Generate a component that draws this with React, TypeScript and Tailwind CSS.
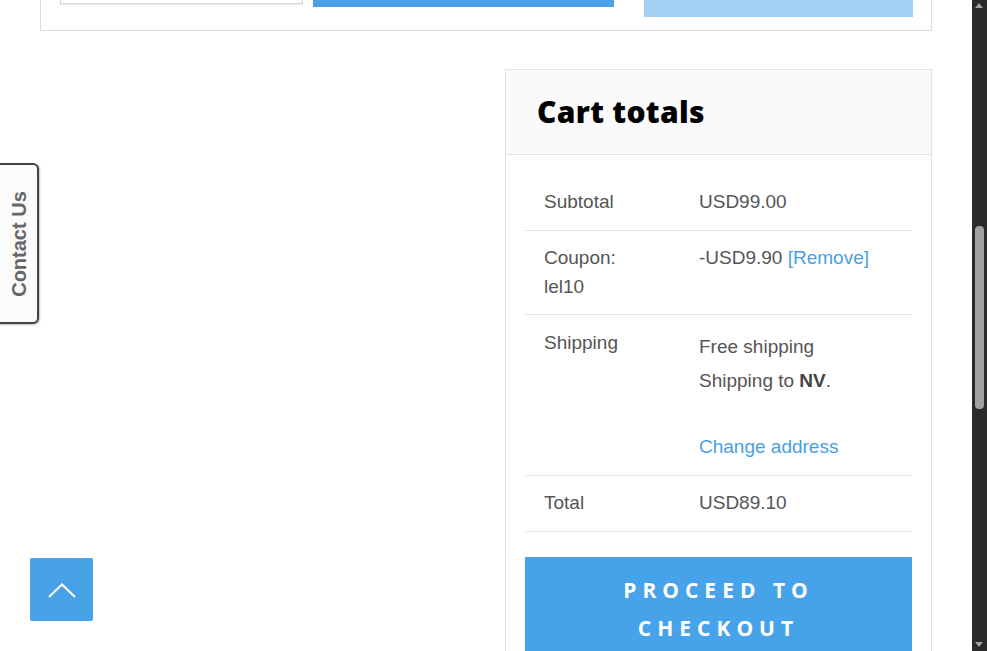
import React from "react";

export default function App() {
  return (
    <div className="relative flex h-[651px] w-[987px] overflow-hidden bg-white" style={{ fontFamily: '"Liberation Sans", Arial, sans-serif' }}>
      <div className="relative flex-1">
        {/* top partial form box */}
        <div className="mx-[40px] h-[31px] border-x border-b border-[#dedede] relative">
          <div className="flex items-start">
            <div className="ml-[19px] h-[4px] w-[243px] border-x border-b border-[#d6d6d6] shadow-[0_1px_0_#eee]" />
            <div className="ml-[10px] h-[7px] w-[301px] bg-[#4aa1e8]" />
            <div className="ml-[30px] h-[17px] w-[269px] bg-[#a3cff3]" />
          </div>
        </div>

        {/* cart totals */}
        <div className="mx-[40px] mt-[38px] flex justify-end">
          <div className="w-[427px] border border-[#e3e3e3]">
            <div className="h-[85px] border-b border-[#e3e3e3] bg-[#fafafa] pl-[31px] pt-[23px]">
              <h2 className="text-[30px] font-extrabold leading-[38px] tracking-[0.3px] text-black" style={{ fontFamily: '"Open Sans", sans-serif' }}>
                Cart totals
              </h2>
            </div>
            <div className="px-[19px] pt-[22px] text-[19px] text-[#555]">
              <div className="flex border-b border-[#e3e3e3] pt-[10px] pb-[14px] leading-[29px]">
                <div className="w-[174px] pl-[19px]">Subtotal</div>
                <div>USD99.00</div>
              </div>
              <div className="flex border-b border-[#e3e3e3] pt-[12px] pb-[13px] leading-[29px]">
                <div className="w-[174px] pl-[19px]">
                  Coupon:
                  <br />
                  lel10
                </div>
                <div>
                  -USD9.90 <span className="text-[#4a9fe3]">[Remove]</span>
                </div>
              </div>
              <div className="flex border-b border-[#e3e3e3] pt-[13px] pb-[14px] leading-[29px]">
                <div className="w-[174px] pl-[19px]">Shipping</div>
                <div className="pt-[2px]">
                  <div className="leading-[34px]">Free shipping</div>
                  <div className="leading-[34px]">
                    Shipping to <strong className="font-bold text-[#444]">NV</strong>.
                  </div>
                  <div className="mt-[34px] text-[#4a9fe3]">Change address</div>
                </div>
              </div>
              <div className="flex border-b border-[#e3e3e3] pt-[12px] pb-[14px] leading-[29px]">
                <div className="w-[174px] pl-[19px]">Total</div>
                <div>USD89.10</div>
              </div>
              <div className="mt-[25px] bg-[#47a3e9] px-[10px] pt-[14px] pb-[14px] text-center text-[21px] font-bold uppercase leading-[38px] tracking-[6px] text-white" style={{ fontFamily: '"Open Sans", sans-serif' }}>
                Proceed to
                <br />
                checkout
              </div>
            </div>
          </div>
        </div>

        {/* contact us tab */}
        <div className="absolute left-[-10px] top-[163px] flex h-[161px] w-[49px] items-center justify-center rounded-r-[6px] border-2 border-[#444] bg-[#fbfbfb] shadow-[1px_1px_2px_rgba(0,0,0,0.25)]">
          <span className="ml-[8px] -rotate-90 whitespace-nowrap text-[20px] font-bold text-[#666]">Contact Us</span>
        </div>

        {/* back to top */}
        <div className="absolute left-[30px] top-[558px] flex h-[63px] w-[63px] items-center justify-center rounded-[2px] bg-[#47a1e6]">
          <svg width="30" height="18" viewBox="0 0 30 18" fill="none">
            <path d="M2 16 L15 3.5 L28 16" stroke="white" strokeWidth="2" />
          </svg>
        </div>
      </div>

      {/* scrollbar */}
      <div className="relative h-full w-[15px] bg-[#2b2b2b]">
        <div className="absolute left-[3px] top-[3px] h-0 w-0 border-x-[4.5px] border-b-[5px] border-x-transparent border-b-[#a3a3a3]" />
        <div className="absolute left-[3px] top-[226px] h-[183px] w-[9px] rounded-[4px] bg-[#a1a1a1]" />
        <div className="absolute bottom-[4px] left-[3px] h-0 w-0 border-x-[4.5px] border-t-[5px] border-x-transparent border-t-[#a3a3a3]" />
      </div>
    </div>
  );
}
